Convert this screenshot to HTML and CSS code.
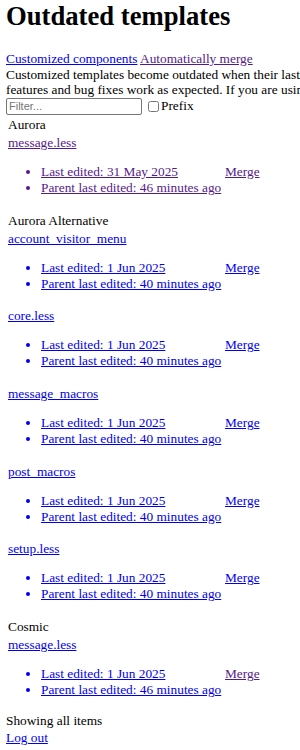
FILE: index.html
```html
<!DOCTYPE html>
<html>
<head>
<meta charset="utf-8">
<link rel="stylesheet" href="styles.css">
</head>
<body>
<div class="page">
<h1 class="title">Outdated templates</h1>
<nav class="nav"><a class="link" href="#">Customized components</a> <a class="link visited" href="#">Automatically merge</a></nav>
<p class="desc">Customized templates become outdated when their last parent template update is newer. Review and merge them so that new<br>features and bug fixes work as expected. If you are using a customized theme, check every template.</p>
<div class="filter">
  <input class="filter-input" type="text" placeholder="Filter...">
  <label class="prefix"><input class="prefix-box" type="checkbox">Prefix</label>
</div>
<div class="groups">
  <section class="group">
    <div class="group-name">Aurora</div>
    <div class="tpl">
      <a class="tpl-name visited" href="#">message.less</a>
      <div class="tpl-row">
        <ul class="dates visited">
          <li><a class="link visited" href="#">Last edited: 31 May 2025</a></li>
          <li><a class="link visited" href="#">Parent last edited: 46 minutes ago</a></li>
        </ul>
        <a class="merge visited" href="#">Merge</a>
      </div>
    </div>
  </section>
  <section class="group">
    <div class="group-name">Aurora Alternative</div>
    <div class="tpl">
      <a class="tpl-name" href="#">account_visitor_menu</a>
      <div class="tpl-row">
        <ul class="dates">
          <li><a class="link" href="#">Last edited: 1 Jun 2025</a></li>
          <li><a class="link" href="#">Parent last edited: 40 minutes ago</a></li>
        </ul>
        <a class="merge" href="#">Merge</a>
      </div>
    </div>
    <div class="tpl">
      <a class="tpl-name" href="#">core.less</a>
      <div class="tpl-row">
        <ul class="dates">
          <li><a class="link" href="#">Last edited: 1 Jun 2025</a></li>
          <li><a class="link" href="#">Parent last edited: 40 minutes ago</a></li>
        </ul>
        <a class="merge" href="#">Merge</a>
      </div>
    </div>
    <div class="tpl">
      <a class="tpl-name" href="#">message_macros</a>
      <div class="tpl-row">
        <ul class="dates">
          <li><a class="link" href="#">Last edited: 1 Jun 2025</a></li>
          <li><a class="link" href="#">Parent last edited: 40 minutes ago</a></li>
        </ul>
        <a class="merge" href="#">Merge</a>
      </div>
    </div>
    <div class="tpl">
      <a class="tpl-name" href="#">post_macros</a>
      <div class="tpl-row">
        <ul class="dates">
          <li><a class="link" href="#">Last edited: 1 Jun 2025</a></li>
          <li><a class="link" href="#">Parent last edited: 40 minutes ago</a></li>
        </ul>
        <a class="merge" href="#">Merge</a>
      </div>
    </div>
    <div class="tpl">
      <a class="tpl-name" href="#">setup.less</a>
      <div class="tpl-row">
        <ul class="dates">
          <li><a class="link" href="#">Last edited: 1 Jun 2025</a></li>
          <li><a class="link" href="#">Parent last edited: 40 minutes ago</a></li>
        </ul>
        <a class="merge" href="#">Merge</a>
      </div>
    </div>
  </section>
  <section class="group">
    <div class="group-name">Cosmic</div>
    <div class="tpl">
      <a class="tpl-name" href="#">message.less</a>
      <div class="tpl-row">
        <ul class="dates">
          <li><a class="link" href="#">Last edited: 1 Jun 2025</a></li>
          <li><a class="link" href="#">Parent last edited: 46 minutes ago</a></li>
        </ul>
        <a class="merge visited" href="#">Merge</a>
      </div>
    </div>
  </section>
</div>
<div class="status">Showing all items</div>
<a class="link" href="#">Log out</a>
</div>
</body>
</html>
```

FILE: styles.css
```css
html, body {
  margin: 0;
  padding: 0;
  background: #fff;
}
body {
  font-family: "Liberation Serif", "Times New Roman", serif;
  font-size: 13.33px;
  line-height: 16px;
  color: #000;
  overflow: hidden;
}
.page {
  padding: 0 6px;
  width: 900px;
}
a, .link {
  color: #0000ee;
  text-decoration: underline;
}
.visited, a.visited {
  color: #551a8b;
}
.title {
  font-size: 26.67px;
  line-height: 32px;
  font-weight: bold;
  margin: 0 0 19px 0;
}
.nav {
  display: block;
  line-height: 16px;
}
.desc {
  margin: 0;
  line-height: 15px;
  white-space: nowrap;
}
.filter {
  display: flex;
  align-items: center;
  gap: 6px;
  height: 18px;
  margin-top: 0;
}
.filter-input {
  box-sizing: border-box;
  width: 136px;
  height: 17px;
  margin: 0;
  padding: 1px 2px;
  border: 1px solid #767676;
  border-radius: 2px;
  font-family: "Liberation Sans", Arial, sans-serif;
  font-size: 11px;
}
.filter-input::placeholder {
  color: #757575;
}
.prefix {
  display: flex;
  align-items: center;
}
.prefix-box {
  margin: 0 2px 0 0;
  width: 11px;
  height: 11px;
}
.groups {
  padding: 0 2px;
  margin-top: 1px;
}
.group-name {
  line-height: 18px;
}
.tpl {
  padding-bottom: 15.7px;
}
.group:last-child .tpl:last-child {
  padding-bottom: 15px;
}
.tpl-name {
  display: block;
  line-height: 18px;
}
.tpl-row {
  display: flex;
  align-items: flex-start;
  margin-top: 12px;
}
.dates {
  margin: 0;
  padding-left: 33px;
  width: 184px;
  flex: none;
  color: #0000ee;
}
.dates.visited {
  color: #551a8b;
}
.dates li {
  line-height: 16px;
  white-space: nowrap;
}
.merge {
  line-height: 16px;
}
.status {
  line-height: 16px;
}
.page > .link {
  display: block;
  line-height: 17px;
}
```
